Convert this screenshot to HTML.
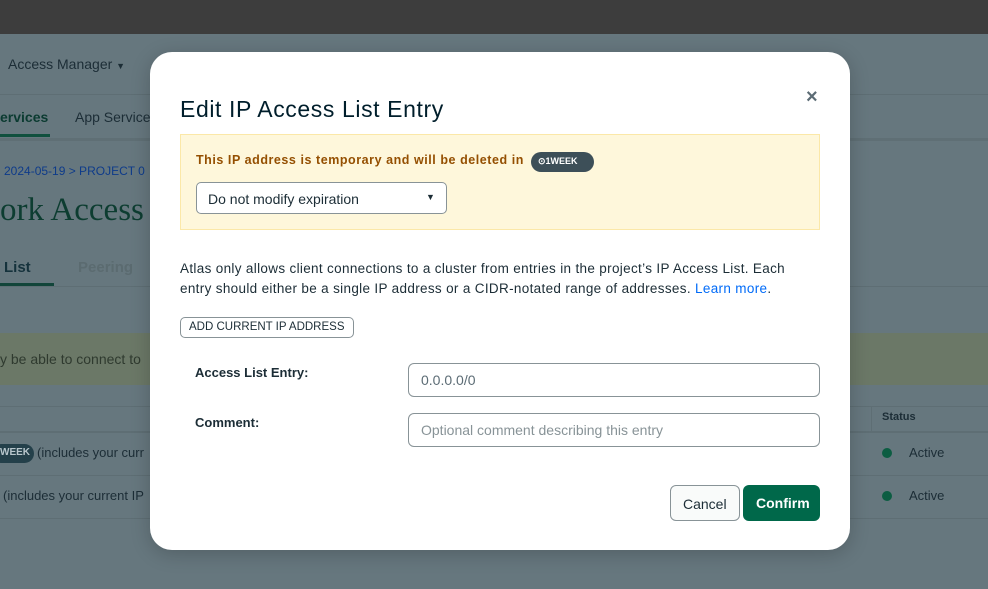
<!DOCTYPE html>
<html><head><style>
*{box-sizing:border-box;margin:0;padding:0}
body{width:988px;height:589px;overflow:hidden;background:#66777e;font-family:"Liberation Sans",sans-serif;position:relative}
.abs{position:absolute;white-space:nowrap}
.top{left:0;top:0;width:988px;height:34px;background:#3d3d3d}
.bg{color:#1c2d36}
.modal{position:absolute;left:150px;top:52px;width:700px;height:498px;background:#fff;border-radius:22px;box-shadow:0 4px 20px rgba(0,0,0,.2)}
.warn{position:absolute;left:30px;top:82px;width:640px;height:96px;background:#fef7db;border:1px solid #fbe8a8}
</style></head><body>
<div class="abs top"></div>
<div class="abs" style="left:0;top:94px;width:988px;height:1px;background:#5e6e74"></div>
<div class="abs" style="left:0;top:138px;width:988px;height:3px;background:#5f6f75"></div>
<div class="abs bg" style="left:8px;top:56px;font-size:14px">Access Manager <span style="font-size:9px">▼</span></div>
<div class="abs" style="left:0;top:109px;font-size:14px;font-weight:bold;color:#0b3b31">ervices</div>
<div class="abs" style="left:0;top:134px;width:50px;height:3px;background:#10503e"></div>
<div class="abs bg" style="left:75px;top:109px;font-size:14px">App Services</div>
<div class="abs" style="left:4px;top:164px;font-size:12px;color:#0e3b8a">2024-05-19 &gt; PROJECT 0</div>
<div class="abs" style="left:0;top:192px;font-size:33px;font-family:'Liberation Serif',serif;color:#0d3d31">ork Access</div>
<div class="abs" style="left:4px;top:259px;font-size:15px;font-weight:bold;color:#15323c">List</div>
<div class="abs" style="left:78px;top:259px;font-size:15px;font-weight:bold;color:#5b6b70">Peering</div>
<div class="abs" style="left:0;top:283px;width:54px;height:3px;background:#12453a"></div>
<div class="abs" style="left:0;top:286px;width:988px;height:1px;background:#5e6e74"></div>
<div class="abs" style="left:0;top:333px;width:988px;height:52px;background:#6b7867"></div>
<div class="abs bg" style="left:0;top:351px;font-size:14px;color:#2f3a2f">y be able to connect to</div>
<div class="abs" style="left:0;top:406px;width:988px;height:1px;background:#5e6e74"></div>
<div class="abs" style="left:0;top:431px;width:988px;height:2px;background:#5e6e74"></div>
<div class="abs" style="left:0;top:475px;width:988px;height:1px;background:#5e6e74"></div>
<div class="abs" style="left:0;top:518px;width:988px;height:1px;background:#5e6e74"></div>
<div class="abs" style="left:871px;top:407px;width:1px;height:24px;background:#5e6e74"></div>
<div class="abs bg" style="left:882px;top:411px;font-size:11px;font-weight:bold">Status</div>
<div class="abs" style="left:882px;top:448px;width:10px;height:10px;border-radius:50%;background:#0c5d42"></div>
<div class="abs bg" style="left:909px;top:445px;font-size:13px">Active</div>
<div class="abs" style="left:882px;top:491px;width:10px;height:10px;border-radius:50%;background:#0c5d42"></div>
<div class="abs bg" style="left:909px;top:488px;font-size:13px">Active</div>
<div class="abs" style="left:-8px;top:444px;width:42px;height:19px;border-radius:10px;background:#24404a;color:#b8c6cc;font-size:10px;font-weight:bold;padding:3px 0 0 8px">WEEK</div>
<div class="abs bg" style="left:37px;top:445px;font-size:13px">(includes your curr</div>
<div class="abs bg" style="left:3px;top:488px;font-size:13px">(includes your current IP</div>

<div class="modal">
<div class="abs" style="left:30px;top:44px;font-size:23px;letter-spacing:0.6px;color:#001e2b">Edit IP Access List Entry</div>
<div class="abs" style="left:656px;top:34px;font-size:20px;font-weight:bold;color:#5c6c75">×</div>
<div class="warn">
<div class="abs" style="left:15px;top:18px;font-size:12.5px;letter-spacing:0.55px;font-weight:bold;color:#944f01">This IP address is temporary and will be deleted in</div>
<div class="abs" style="left:350px;top:17px;width:63px;height:20px;border-radius:10px;background:#3d4f58;color:#fff;font-size:9px;font-weight:bold;padding:4px 0 0 7px">⊙1WEEK</div>
<div class="abs" style="left:15px;top:47px;width:251px;height:32px;border:1px solid #889397;border-radius:5px;background:#fff;font-size:14px;color:#1c2d36;padding:8px 0 0 11px">Do not modify expiration<span class="abs" style="left:229px;top:9px;font-size:9px">▼</span></div>
</div>
<div class="abs" style="left:30px;top:207px;font-size:13.5px;letter-spacing:0.33px;line-height:20px;color:#1c2d36">Atlas only allows client connections to a cluster from entries in the project’s IP Access List. Each<br>entry should either be a single IP address or a CIDR-notated range of addresses. <span style="color:#016bf8">Learn more</span>.</div>
<div class="abs" style="left:30px;top:265px;width:174px;height:21px;border:1px solid #889397;border-radius:5px;font-size:11.5px;color:#1c2d36;padding:3px 0 0 8px">ADD CURRENT IP ADDRESS</div>
<div class="abs" style="left:45px;top:313px;font-size:13px;font-weight:bold;color:#1c2d36">Access List Entry:</div>
<div class="abs" style="left:258px;top:311px;width:412px;height:34px;border:1px solid #889397;border-radius:6px;font-size:14px;color:#5c6c75;padding:8px 0 0 12px">0.0.0.0/0</div>
<div class="abs" style="left:45px;top:363px;font-size:13px;font-weight:bold;color:#1c2d36">Comment:</div>
<div class="abs" style="left:258px;top:361px;width:412px;height:34px;border:1px solid #889397;border-radius:6px;font-size:14px;color:#889397;padding:8px 0 0 12px">Optional comment describing this entry</div>
<div class="abs" style="left:520px;top:433px;width:70px;height:36px;border:1px solid #889397;border-radius:6px;background:#f9fbfa;font-size:14px;color:#1c2d36;padding:10px 0 0 12px">Cancel</div>
<div class="abs" style="left:593px;top:433px;width:77px;height:36px;border-radius:6px;background:#00684a;font-size:14px;font-weight:bold;color:#fff;padding:10px 0 0 13px">Confirm</div>
</div>
</body></html>
